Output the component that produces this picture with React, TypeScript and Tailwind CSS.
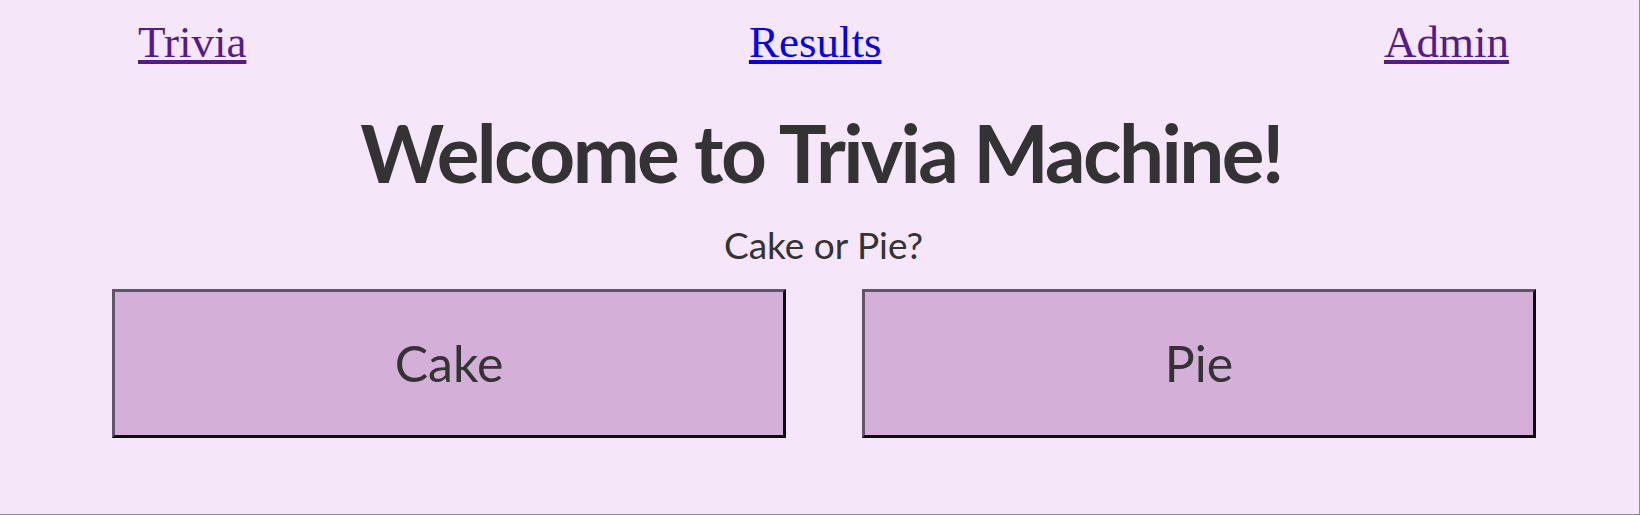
export default function App() {
  return (
    <div className="min-h-[515px] w-full border-r border-b border-[#8c8c8c] bg-[#f6e6fa]">
      <nav className="flex items-start justify-between pl-[138px] pr-[130px] pt-[16px] font-['Liberation_Serif',serif] text-[45px] leading-[52px]">
        <a href="#" className="text-[#551a8b] underline">
          Trivia
        </a>
        <a href="#" className="text-[#0000ee] underline">
          Results
        </a>
        <a href="#" className="text-[#551a8b] underline">
          Admin
        </a>
      </nav>

      <div className="font-['Lato',sans-serif] text-[#333333]">
        <h1 className="mt-[36px] pl-[3px] text-center text-[80px] font-bold leading-[96px] tracking-[-2.6px]">
          Welcome to Trivia Machine!
        </h1>
        <p className="mt-[24px] pl-[8px] text-center text-[37px] leading-[42px]">Cake or Pie?</p>

        <div className="mt-[23px] grid grid-cols-2 gap-[76px] pl-[112px] pr-[103px]">
          <button className="h-[149px] border-[3px] border-t-[#615468] border-l-[#615468] border-r-[#0d0b10] border-b-[#0d0b10] bg-[#d4b0d8] text-[50px] text-[#333333]">
            Cake
          </button>
          <button className="h-[149px] border-[3px] border-t-[#615468] border-l-[#615468] border-r-[#0d0b10] border-b-[#0d0b10] bg-[#d4b0d8] text-[50px] text-[#333333]">
            Pie
          </button>
        </div>
      </div>
    </div>
  )
}
